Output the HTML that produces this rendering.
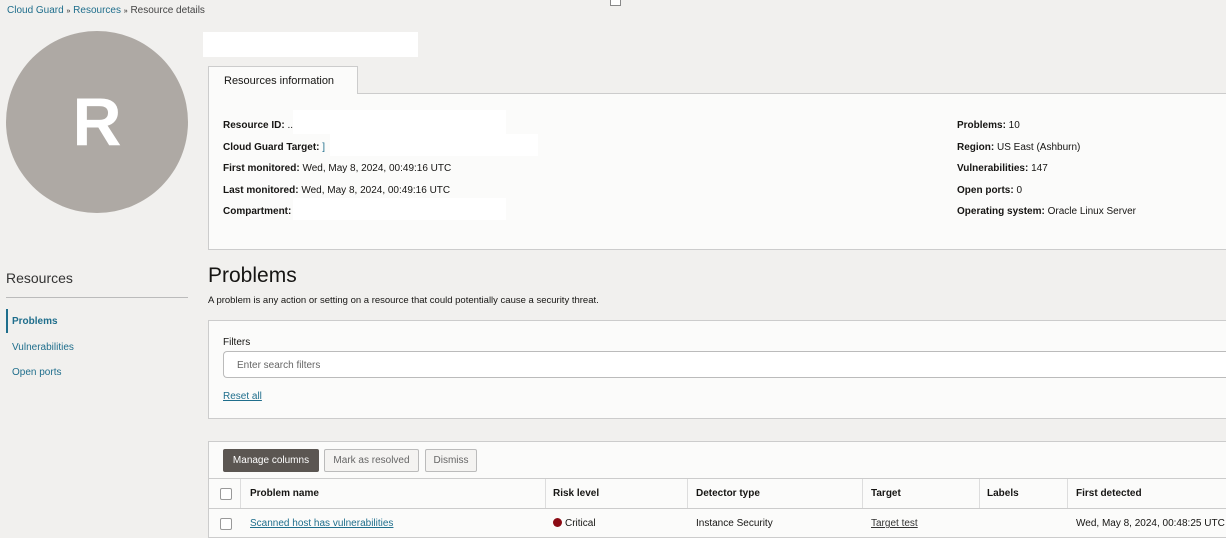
<!DOCTYPE html>
<html><head><style>
body{margin:0;width:1226px;height:538px;overflow:hidden;background:#f1f0ee;font-family:"Liberation Sans",sans-serif;color:#161513;position:relative}
.a{position:absolute}
.link{color:#1f6e8c}
.s{font-size:10px}
b{font-weight:bold}
.wh{background:#fff}
.cb{width:10px;height:10px;border:1px solid #999;border-radius:2px;background:#fff}
.btn{height:21px;line-height:21px;font-size:10px;border:1px solid #bbb;border-radius:2px;background:#f4f3f1;color:#666;text-align:center}
.vl{width:1px;background:#ddd}
</style></head><body>
<div class="a s" style="left:7px;top:5px"><span class="link">Cloud Guard</span> <span style="font-size:7px">»</span> <span class="link">Resources</span> <span style="font-size:7px">»</span> <span style="color:#444">Resource details</span></div>
<div class="a" style="left:610px;top:0;width:9px;height:5px;border:1px solid #888;border-top:none;background:#fff"></div>
<div class="a wh" style="left:203px;top:32px;width:215px;height:25px"></div>
<div class="a" style="left:6px;top:31px;width:182px;height:182px;border-radius:50%;background:#aea9a4;color:#fff;font-size:68px;font-weight:bold;text-align:center;line-height:182px">R</div>
<div class="a" style="left:208px;top:93px;width:1018px;height:157px;background:#fbfbfa;border:1px solid #ccc;border-right:none;box-sizing:border-box"></div>
<div class="a" style="left:208px;top:66px;width:150px;height:28px;background:#fbfbfa;border:1px solid #ccc;border-bottom:none;box-sizing:border-box;font-size:11px;padding:8px 0 0 15px">Resources information</div>
<div class="a wh" style="left:293px;top:110px;width:213px;height:24px"></div>
<div class="a wh" style="left:330px;top:134px;width:208px;height:22px"></div>
<div class="a wh" style="left:293px;top:198px;width:213px;height:22px"></div>
<div class="a s" style="left:223px;top:115px;line-height:21.5px">
<div><b>Resource ID:</b> ..</div>
<div><b>Cloud Guard Target:</b> <span class="link">]</span></div>
<div><b>First monitored:</b> Wed, May 8, 2024, 00:49:16 UTC</div>
<div><b>Last monitored:</b> Wed, May 8, 2024, 00:49:16 UTC</div>
<div><b>Compartment:</b></div>
</div>
<div class="a s" style="left:957px;top:115px;line-height:21.5px">
<div><b>Problems:</b> 10</div>
<div><b>Region:</b> US East (Ashburn)</div>
<div><b>Vulnerabilities:</b> 147</div>
<div><b>Open ports:</b> 0</div>
<div><b>Operating system:</b> Oracle Linux Server</div>
</div>
<div class="a" style="left:6px;top:270px;font-size:14px;color:#333">Resources</div>
<div class="a" style="left:6px;top:297px;width:182px;height:1px;background:#bbb"></div>
<div class="a" style="left:6px;top:309px;width:2px;height:24px;background:#1f6e8c"></div>
<div class="a s" style="left:12px;top:316px;color:#1f6e8c;font-weight:bold">Problems</div>
<div class="a s link" style="left:12px;top:342px">Vulnerabilities</div>
<div class="a s link" style="left:12px;top:367px">Open ports</div>
<div class="a" style="left:208px;top:264px;font-size:21px">Problems</div>
<div class="a" style="left:208px;top:295px;font-size:9.5px">A problem is any action or setting on a resource that could potentially cause a security threat.</div>
<div class="a" style="left:208px;top:320px;width:1018px;height:99px;background:#fbfbfa;border:1px solid #ccc;border-right:none;box-sizing:border-box"></div>
<div class="a" style="left:223px;top:337px;font-size:10px">Filters</div>
<div class="a" style="left:223px;top:351px;width:1003px;height:27px;background:#fff;border:1px solid #bbb;border-right:none;border-radius:4px 0 0 4px;box-sizing:border-box;font-size:10px;color:#666;padding:8px 0 0 13px">Enter search filters</div>
<div class="a s link" style="left:223px;top:391px;text-decoration:underline">Reset all</div>
<div class="a" style="left:208px;top:441px;width:1018px;height:97px;background:#fbfbfa;border:1px solid #ccc;border-right:none;box-sizing:border-box"></div>
<div class="a btn" style="left:223px;top:449px;width:94px;background:#5b5652;border-color:#5b5652;color:#fff">Manage columns</div>
<div class="a btn" style="left:324px;top:449px;width:93px">Mark as resolved</div>
<div class="a btn" style="left:425px;top:449px;width:50px">Dismiss</div>
<div class="a" style="left:209px;top:478px;width:1017px;height:1px;background:#ccc"></div>
<div class="a" style="left:209px;top:508px;width:1017px;height:1px;background:#ccc"></div>
<div class="a vl" style="left:240px;top:479px;height:29px"></div>
<div class="a vl" style="left:545px;top:479px;height:29px"></div>
<div class="a vl" style="left:687px;top:479px;height:29px"></div>
<div class="a vl" style="left:862px;top:479px;height:29px"></div>
<div class="a vl" style="left:979px;top:479px;height:29px"></div>
<div class="a vl" style="left:1067px;top:479px;height:29px"></div>
<div class="a cb" style="left:220px;top:488px"></div>
<div class="a cb" style="left:220px;top:518px"></div>
<div class="a s" style="left:250px;top:488px"><b>Problem name</b></div>
<div class="a s" style="left:553px;top:488px"><b>Risk level</b></div>
<div class="a s" style="left:696px;top:488px"><b>Detector type</b></div>
<div class="a s" style="left:871px;top:488px"><b>Target</b></div>
<div class="a s" style="left:987px;top:488px"><b>Labels</b></div>
<div class="a s" style="left:1076px;top:488px"><b>First detected</b></div>
<div class="a s link" style="left:250px;top:518px;text-decoration:underline">Scanned host has vulnerabilities</div>
<div class="a" style="left:553px;top:518px;width:9px;height:9px;border-radius:50%;background:#8b0b14"></div>
<div class="a s" style="left:565px;top:518px">Critical</div>
<div class="a s" style="left:696px;top:518px">Instance Security</div>
<div class="a s" style="left:871px;top:518px;text-decoration:underline;color:#333">Target test</div>
<div class="a s" style="left:1076px;top:518px;white-space:nowrap">Wed, May 8, 2024, 00:48:25 UTC</div>
</body></html>
